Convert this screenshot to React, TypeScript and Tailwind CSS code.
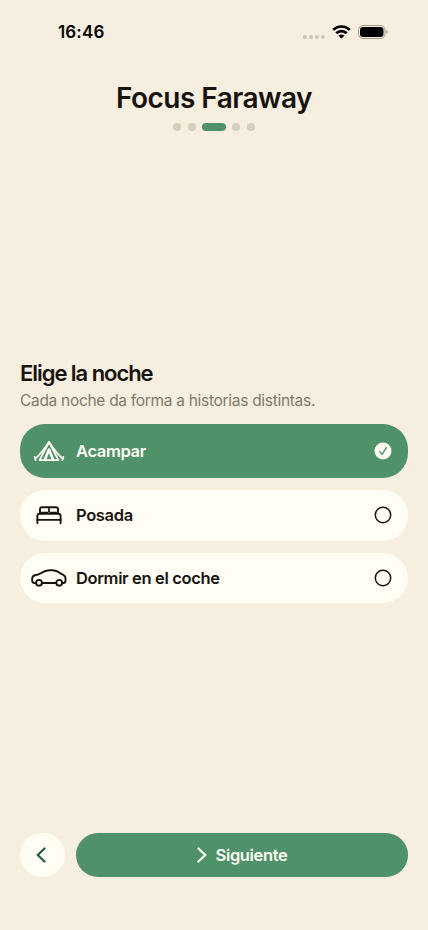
import { useState } from "react";
import type { ReactNode } from "react";
import clsx from "clsx";

type Option = {
  id: string;
  label: string;
  icon: ReactNode;
};

function TentIcon() {
  return (
    <svg width="32" height="24" viewBox="0 0 32 24" fill="none" stroke="currentColor" strokeLinecap="round" strokeLinejoin="round">
      <path d="M1.600 17.800 2.700 21.200M30.400 17.800 29.300 21.200" strokeWidth="1.700" />
      <path d="M2.300 19.600C7.800 15.200 12 9 16 3c4 6 8.200 12.200 13.700 16.600" strokeWidth="1.700" />
      <path d="M16 3 6.600 21.200h18.800L16 3Z" strokeWidth="1.800" />
      <path d="M16 10.600 11.800 21M16 10.600 20.200 21" strokeWidth="2.600" />
    </svg>
  );
}

function BedIcon() {
  return (
    <svg width="26" height="20" viewBox="0 0 26 20" fill="none" stroke="currentColor" strokeWidth="1.900" strokeLinecap="round" strokeLinejoin="round">
      <path d="M1.400 18.200V11c0-1.500.8-2.300 2.300-2.300h18.600c1.500 0 2.300.8 2.300 2.300v7.200" />
      <path d="M1.400 14.900h23.200" />
      <path d="M4 8.500V4.200c0-1.300.7-2 2-2h14c1.300 0 2 .7 2 2v4.300" />
      <path d="M5.600 7.400h5.800c.9 0 1.300-.4 1.300-1.200V2.500M20.400 7.400h-5.800c-.9 0-1.300-.4-1.300-1.200V2.500" strokeWidth="1.100" />
    </svg>
  );
}

function CarIcon() {
  return (
    <svg width="36" height="20" viewBox="0 0 36 20" fill="none" stroke="currentColor" strokeWidth="1.900" strokeLinecap="round" strokeLinejoin="round">
      <path d="M4.800 15H3.400c-1.500 0-2.200-.8-2.200-2.200v-2c0-2 .8-3.100 2.800-3.500 3-.6 4.300-1 6.200-2.300C13.200 3 15.200 2.300 18.600 2.300h3c3.200 0 4.900.7 7.400 2.800 1.200 1 2.100 1.300 3.300 1.800 1.500.7 2.200 1.800 2.200 3.400v2.600c0 1.400-.7 2.100-2.100 2.100h-.8M11.200 15h13.800" />
      <circle cx="8" cy="14.800" r="2.900" />
      <circle cx="28.200" cy="14.800" r="2.900" />
    </svg>
  );
}

const OPTIONS: Option[] = [
  { id: "camp", label: "Acampar", icon: <TentIcon /> },
  { id: "inn", label: "Posada", icon: <BedIcon /> },
  { id: "car", label: "Dormir en el coche", icon: <CarIcon /> },
];

function StatusBar() {
  return (
    <div className="flex h-16 items-center justify-between pr-[39px] pl-[58px] text-black">
      <span className="pt-[2px] text-[17px] font-semibold tracking-[0.15px]">16:46</span>
      <div className="flex items-center">
        <div className="mt-[9px] mr-[7px] flex gap-[2px]">
          {[0, 1, 2, 3].map((dot) => (
            <span key={dot} className="size-[4px] rounded-full bg-[#cbc4b5]" />
          ))}
        </div>
        <svg width="19" height="14" viewBox="0 0 19 14" fill="none" stroke="currentColor" strokeWidth="2.700">
          <path d="M1.200 4.900a11.800 11.800 0 0 1 16.600 0" />
          <path d="M4.300 8.300a7.300 7.300 0 0 1 10.400 0" />
          <path d="M9.500 13.600 6.600 10.800a4 4 0 0 1 5.800 0Z" fill="currentColor" stroke="none" />
        </svg>
        <svg className="ml-[7px]" width="31" height="14" viewBox="0 0 31 14">
          <rect x=".5" y=".5" width="26.500" height="13" rx="4.300" fill="none" stroke="#9f998d" />
          <rect x="2" y="2" width="23.500" height="10" rx="2.900" fill="currentColor" />
          <path d="M28.300 4.800c1.700.6 1.700 3.800 0 4.400Z" fill="#9f998d" />
        </svg>
      </div>
    </div>
  );
}

function StepDots({ count, active }: { count: number; active: number }) {
  return (
    <div className="flex justify-center gap-[6.500px]">
      {Array.from({ length: count }, (_, i) => (
        <span
          key={i}
          className={clsx("h-2 rounded-full", i === active ? "w-[23.500px] bg-[#4f9168]" : "w-2 bg-[#d1cfba]")}
        />
      ))}
    </div>
  );
}

function RadioMark({ checked }: { checked: boolean }) {
  return (
    <svg width="18" height="18" viewBox="0 0 18 18" fill="none">
      {checked ? (
        <>
          <circle cx="9" cy="9" r="8.500" fill="#fffdf4" />
          <path d="m5.700 9.600 2.400 2.800 4.300-6.700" stroke="#4f9168" strokeWidth="1.400" strokeLinecap="round" strokeLinejoin="round" />
        </>
      ) : (
        <circle cx="9" cy="9" r="7.700" stroke="currentColor" strokeWidth="1.500" />
      )}
    </svg>
  );
}

export default function App() {
  const [selected, setSelected] = useState("camp");

  return (
    <main className="flex h-[930px] w-full flex-col bg-[#f6eedf] font-['Inter',sans-serif] text-[#18140d]">
      <StatusBar />

      <header className="pt-[14px]">
        <h1 className="mb-[5px] text-center text-[28px] leading-10 font-semibold tracking-[-0.550px]">Focus Faraway</h1>
        <StepDots count={5} active={2} />
      </header>

      <section className="mt-[227px] px-5">
        <h2 className="text-[22px] leading-[30px] font-semibold tracking-[-1.050px]">Elige la noche</h2>
        <p className="mt-[1px] text-[15.500px] leading-6 tracking-[-0.3px] text-[#7f7a6b]">Cada noche da forma a historias distintas.</p>

        <div className="mt-[10.500px] flex flex-col gap-3">
          {OPTIONS.map((option) => {
            const checked = option.id === selected;
            return (
              <button
                key={option.id}
                onClick={() => setSelected(option.id)}
                className={clsx(
                  "flex items-center rounded-[25px] pr-4 pl-[11px]",
                  checked ? "h-[54.500px] bg-[#4f9168] text-[#fffdf4]" : "h-[50.500px] bg-[#fffdf4]",
                )}
              >
                <span className="flex w-9 justify-center">{option.icon}</span>
                <span className="ml-[9px] flex-1 pt-[1px] text-left text-[16.500px] font-semibold tracking-[-0.350px]">{option.label}</span>
                <RadioMark checked={checked} />
              </button>
            );
          })}
        </div>
      </section>

      <footer className="mt-auto flex gap-[11.500px] px-5 pb-[53px]">
        <button aria-label="Atrás" className="flex size-[44.500px] items-center justify-center rounded-full bg-[#fffdf4] text-[#285f3b]">
          <svg className="-ml-[2px]" width="10" height="16" viewBox="0 0 10 16" fill="none" stroke="currentColor" strokeWidth="2.300" strokeLinecap="round" strokeLinejoin="round">
            <path d="M8.500 1.500 1.700 8l6.800 6.500" />
          </svg>
        </button>
        <button className="flex h-[44.500px] flex-1 items-center justify-center gap-[9px] rounded-full bg-[#4f9168] text-[#fffdf4]">
          <svg width="10" height="16" viewBox="0 0 10 16" fill="none" stroke="currentColor" strokeWidth="2.300" strokeLinecap="round" strokeLinejoin="round">
            <path d="M1.500 1.500 8.300 8l-6.800 6.500" />
          </svg>
          <span className="pt-[1px] text-[16.500px] font-semibold tracking-[-0.350px]">Siguiente</span>
        </button>
      </footer>
    </main>
  );
}
